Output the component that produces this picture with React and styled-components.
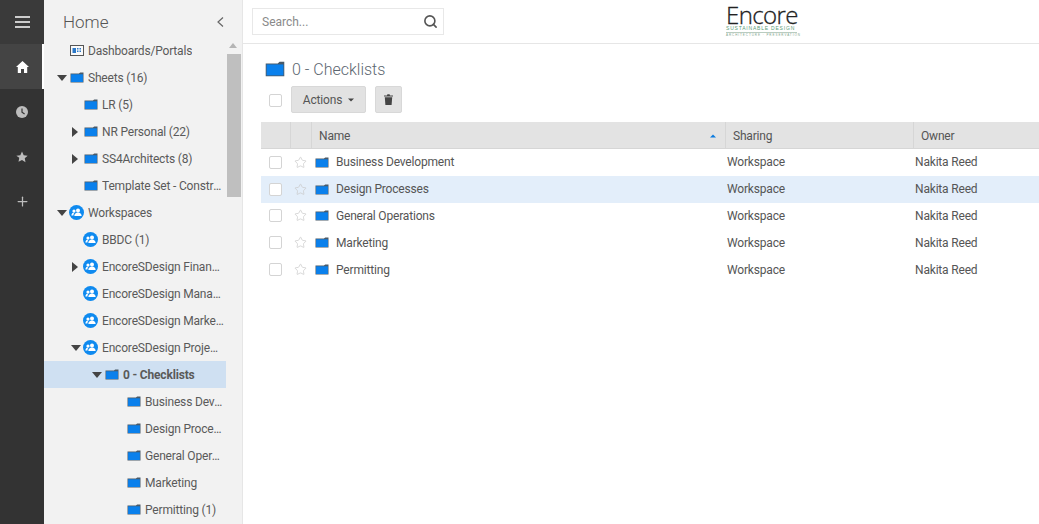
import styled, { createGlobalStyle } from "styled-components";
import { Plus, Search, Star } from "lucide-react";

const GlobalStyle = createGlobalStyle`
  html, body { margin: 0; padding: 0; height: 100%; overflow: hidden; }
  body { font-family: Roboto, "Liberation Sans", sans-serif; color: #555; background: #fff; }
  #root { height: 100%; }
`;

const Shell = styled.div`
  display: flex;
  height: 524px;
  overflow: hidden;
`;

/* left icon rail */
const Rail = styled.nav`
  width: 44px;
  flex: none;
  background: #333;
  display: flex;
  flex-direction: column;
`;

const RailItem = styled.div`
  height: 45px;
  display: flex;
  align-items: center;
  justify-content: center;
  box-sizing: border-box;
  color: ${(p) => (p.$active ? "#fff" : "#bdbdbd")};
  background: ${(p) => (p.$active ? "#444" : "transparent")};
  border-right: 2px solid ${(p) => (p.$active ? "#fff" : "transparent")};
  padding-left: 2px;
`;

const Burger = styled(RailItem)`
  height: 44px;
  color: #ccc;
  background: #3a3a3a;
`;

/* tree panel */
const Sidebar = styled.aside`
  width: 198px;
  flex: none;
  background: #f2f2f2;
  display: flex;
  flex-direction: column;
  border-right: 1px solid #e6e6e6;
  box-sizing: content-box;
  overflow: hidden;
`;

const SideHeader = styled.div`
  height: 37px;
  flex: none;
  display: flex;
  align-items: center;
  justify-content: space-between;
  padding: 6px 18px 0 19px;
  box-sizing: border-box;
`;

const SideTitle = styled.h2`
  margin: 0;
  font-size: 17px;
  font-weight: 300;
  color: #555;
`;

const SideBody = styled.div`
  flex: 1;
  min-height: 0;
  display: flex;
`;

const Tree = styled.ul`
  list-style: none;
  margin: 0;
  padding: 0;
  width: 182px;
  flex: none;
`;

const TreeRow = styled.li`
  height: 27px;
  display: flex;
  align-items: center;
  box-sizing: border-box;
  padding-left: ${(p) => p.$pad}px;
  padding-right: ${(p) => p.$tail || 1}px;
  background: ${(p) => (p.$selected ? "#cfe0f2" : "transparent")};
`;

const ArrowSlot = styled.span`
  width: 13px;
  flex: none;
  display: flex;
  align-items: center;
  color: #444;
`;

const TreeLabel = styled.span`
  margin-left: 4px;
  font-size: 12px;
  letter-spacing: -0.18px;
  font-weight: ${(p) => (p.$selected ? 700 : 400)};
  color: #5a5a5a;
  white-space: nowrap;
  overflow: hidden;
  text-overflow: ellipsis;
`;

const Scrollbar = styled.div`
  width: 14px;
  margin-left: 1px;
  flex: none;
  display: flex;
  flex-direction: column;
  align-items: center;
`;

const ScrollUp = styled.div`
  height: 17px;
  flex: none;
  display: flex;
  align-items: center;
  justify-content: center;
  color: #b5b5b5;
`;

const ScrollThumb = styled.div`
  width: 100%;
  height: 143px;
  background: #bfbfbf;
`;

/* main area */
const Main = styled.main`
  flex: 1;
  min-width: 0;
  display: flex;
  flex-direction: column;
`;

const TopBar = styled.header`
  height: 44px;
  flex: none;
  box-sizing: border-box;
  border-bottom: 1px solid #e6e6e6;
  display: flex;
  align-items: flex-start;
  padding: 8px 0 0 9px;
`;

const SearchBox = styled.div`
  width: 192px;
  height: 27px;
  box-sizing: border-box;
  border: 1px solid #e8e8e8;
  display: flex;
  align-items: center;
  justify-content: space-between;
  padding: 0 5px 0 9px;
  font-size: 12px;
  color: #8a8a8a;
`;

const Logo = styled.div`
  margin-left: 282px;
  margin-top: -3px;
  width: 71px;
  display: flex;
  flex-direction: column;
`;

const LogoName = styled.div`
  font-family: "Open Sans", "Liberation Sans", sans-serif;
  font-size: 24px;
  font-weight: 300;
  line-height: 20px;
  letter-spacing: -0.6px;
  color: #222;
  -webkit-text-stroke: 0.3px #222;
`;

const LogoTag = styled.div`
  font-family: "Liberation Sans", sans-serif;
  font-size: 5px;
  line-height: 5px;
  letter-spacing: 0.8px;
  white-space: nowrap;
  color: #5a9e78;
  margin-top: 1px;
  padding-bottom: 1px;
  border-bottom: 1px solid #b9ccc0;
`;

const LogoSub = styled(LogoTag)`
  font-size: 3px;
  line-height: 4px;
  margin-top: 0;
  border: 0;
  padding: 0;
  letter-spacing: 0.95px;
  color: #7fa58e;
`;

const Content = styled.section`
  flex: 1;
  min-height: 0;
  padding: 0 0 0 18px;
`;

const PageTitle = styled.div`
  height: 40px;
  display: flex;
  align-items: center;
  gap: 7px;
  padding: 10px 0 0 4px;
  box-sizing: border-box;
  font-size: 16px;
  font-weight: 300;
  color: #5c6670;
`;

const Toolbar = styled.div`
  height: 38px;
  display: flex;
  align-items: flex-start;
  gap: 9px;
  padding: 2px 0 0 8px;
  box-sizing: border-box;
`;

const CheckBox = styled.span`
  width: 13px;
  height: 13px;
  flex: none;
  display: block;
  box-sizing: border-box;
  background: #fff;
  border: 1px solid #d4d4d4;
  border-radius: 2px;
`;

const ToolCheck = styled(CheckBox)`
  margin-top: 8px;
`;

const ToolButton = styled.button`
  height: 27px;
  width: 75px;
  padding: 0;
  display: flex;
  align-items: center;
  justify-content: center;
  gap: 6px;
  background: #e2e2e2;
  border: 1px solid #d8d8d8;
  border-radius: 2px;
  font-family: inherit;
  font-size: 12px;
  letter-spacing: -0.18px;
  color: #555;
`;

const IconButton = styled(ToolButton)`
  width: 27px;
`;

const GridRow = styled.div`
  display: grid;
  grid-template-columns: 30px 21px 414px 188px 1fr;
  height: ${(p) => p.$h}px;
  align-items: center;
  background: ${(p) => (p.$hover ? "#e3eefa" : "transparent")};
`;

const HeadRow = styled(GridRow)`
  background: #e3e3e3;
  border-bottom: 1px solid #d6d6d6;
  box-sizing: border-box;
  align-items: stretch;
`;

const HeadCell = styled.div`
  display: flex;
  align-items: center;
  justify-content: space-between;
  padding: 2px 9px 0 7px;
  font-size: 12px;
  letter-spacing: -0.18px;
  color: #555;
  border-right: 1px solid ${(p) => (p.$last ? "transparent" : "#d6d6d6")};
`;

const CheckCell = styled.div`
  display: flex;
  align-items: center;
  padding-left: 8px;
`;

const StarCell = styled.div`
  display: flex;
  align-items: center;
  padding-left: 3px;
  color: #c9c9c9;
`;

const NameCell = styled.div`
  display: flex;
  align-items: center;
  gap: 7px;
  padding-left: 3px;
  font-size: 12px;
  letter-spacing: -0.18px;
`;

const TextCell = styled.div`
  font-size: 12px;
  letter-spacing: -0.18px;
  padding-left: ${(p) => p.$pad}px;
`;

const TeamSvg = styled.svg`
  flex: none;
  margin-left: -1px;
`;

const IconSvg = styled.svg`
  flex: none;
`;

const FolderIcon = ({ w = 14, h = 11 }) => (
  <IconSvg width={w} height={h} viewBox="0 0 14 11">
    <path d="M.5 1.6h8.4L10.2.4h3.3v10.2H.5z" fill="#4a5a68" />
    <rect x="1.1" y="2.3" width="11.8" height="7.7" fill="#0a80ec" />
  </IconSvg>
);

const TeamIcon = () => (
  <TeamSvg width="15" height="15" viewBox="0 0 15 15">
    <circle cx="7.5" cy="7.5" r="7.5" fill="#0f8aef" />
    <circle cx="9" cy="5.4" r="2" fill="#fff" />
    <path d="M5.3 11c0-2.2 1.6-3.4 3.7-3.4s3.6 1.2 3.6 3.4z" fill="#fff" />
    <circle cx="5" cy="6" r="1.6" fill="#fff" />
    <path d="M2.4 10.4c0-1.9 1.2-2.9 2.7-2.9l.5.1c-.8.7-1.2 1.6-1.2 2.8z" fill="#fff" />
  </TeamSvg>
);

const DashIcon = () => (
  <IconSvg width="14" height="11" viewBox="0 0 14 11">
    <rect x="0.5" y="0.5" width="13" height="10" fill="#fafafa" stroke="#555" />
    <rect x="2.5" y="3" width="3.5" height="5" fill="#2a78c8" />
    <path d="M7 3h1.5v1.4H7zM9.5 3H11v1.4H9.5zM7 5.5h1.5v1.4H7zM9.5 5.5H11v1.4H9.5z" fill="#2a78c8" />
  </IconSvg>
);

const Triangle = ({ dir, color = "#444" }) => {
  const points = {
    right: "1,0 7,5 1,10",
    down: "0,2 10,2 5,8",
    up: "0,7 8,7 4,2",
  };
  return (
    <svg width={dir === "right" ? 8 : 10} height="10" viewBox={dir === "right" ? "0 0 8 10" : "0 0 10 10"}>
      <polygon points={points[dir]} fill={color} />
    </svg>
  );
};

const MenuIcon = () => (
  <svg width="15" height="14" viewBox="0 0 15 14" fill="currentColor">
    <rect width="15" height="2" y="1" />
    <rect width="15" height="2" y="6" />
    <rect width="15" height="2" y="11" />
  </svg>
);

const HomeIcon = () => (
  <svg width="13" height="12" viewBox="0 0 13 12" fill="currentColor">
    <path d="M6.5 0L13 6h-1.8v6H8V8H5v4H1.8V6H0z" />
  </svg>
);

const ClockIcon = () => (
  <svg width="12" height="12" viewBox="0 0 12 12">
    <circle cx="6" cy="6" r="6" fill="currentColor" />
    <path d="M6 2.5V6.3L8.6 8" fill="none" stroke="#333" strokeWidth="1.2" />
  </svg>
);

const SolidStar = () => (
  <svg width="12" height="12" viewBox="0 0 24 24" fill="currentColor">
    <path d="M12 1l3.4 7.3 7.9 1-5.8 5.4 1.5 7.9L12 17.8l-7 3.8 1.5-7.9L.7 9.3l7.9-1z" />
  </svg>
);

const TrashIcon = () => (
  <svg width="9" height="11" viewBox="0 0 9 11" fill="#444">
    <path d="M0 1.4h3L3.4.3h2.2L6 1.4h3v1.2H0zM.8 3.3h7.4L7.6 11H1.4z" />
  </svg>
);

const tree = [
  { pad: 13, icon: "dash", label: "Dashboards/Portals" },
  { pad: 13, arrow: "down", icon: "folder", label: "Sheets (16)" },
  { pad: 27, icon: "folder", label: "LR (5)" },
  { pad: 27, arrow: "right", icon: "folder", label: "NR Personal (22)" },
  { pad: 27, arrow: "right", icon: "folder", label: "SS4Architects (8)" },
  { pad: 27, icon: "folder", label: "Template Set - Construction" },
  { pad: 13, arrow: "down", icon: "team", label: "Workspaces" },
  { pad: 27, icon: "team", label: "BBDC (1)" },
  { pad: 27, arrow: "right", icon: "team", label: "EncoreSDesign Financial" },
  { pad: 27, icon: "team", label: "EncoreSDesign Management" },
  { pad: 27, icon: "team", label: "EncoreSDesign Marketing" },
  { pad: 27, tail: 4, arrow: "down", icon: "team", label: "EncoreSDesign Projects" },
  { pad: 48, arrow: "down", icon: "folder", label: "0 - Checklists", selected: true },
  { pad: 70, icon: "folder", label: "Business Development" },
  { pad: 70, icon: "folder", label: "Design Processes" },
  { pad: 70, icon: "folder", label: "General Operations" },
  { pad: 70, icon: "folder", label: "Marketing" },
  { pad: 70, icon: "folder", label: "Permitting (1)" },
];

const rows = ["Business Development", "Design Processes", "General Operations", "Marketing", "Permitting"];

function TreeIcon({ type }) {
  if (type === "team") return <TeamIcon />;
  if (type === "dash") return <DashIcon />;
  return <FolderIcon />;
}

export default function App() {
  return (
    <Shell>
      <GlobalStyle />
      <Rail>
        <Burger><MenuIcon /></Burger>
        <RailItem $active><HomeIcon /></RailItem>
        <RailItem><ClockIcon /></RailItem>
        <RailItem><SolidStar /></RailItem>
        <RailItem><Plus size={15} strokeWidth={2} /></RailItem>
      </Rail>

      <Sidebar>
        <SideHeader>
          <SideTitle>Home</SideTitle>
          <svg width="7" height="10" viewBox="0 0 7 10" fill="none" stroke="#666" strokeWidth="1.2">
            <path d="M6 0.5L1 5l5 4.5" />
          </svg>
        </SideHeader>
        <SideBody>
          <Tree>
            {tree.map((item) => (
              <TreeRow key={item.label} $pad={item.pad} $tail={item.tail} $selected={item.selected}>
                <ArrowSlot>{item.arrow && <Triangle dir={item.arrow} />}</ArrowSlot>
                <TreeIcon type={item.icon} />
                <TreeLabel $selected={item.selected}>{item.label}</TreeLabel>
              </TreeRow>
            ))}
          </Tree>
          <Scrollbar>
            <ScrollUp><Triangle dir="up" color="#b5b5b5" /></ScrollUp>
            <ScrollThumb />
          </Scrollbar>
        </SideBody>
      </Sidebar>

      <Main>
        <TopBar>
          <SearchBox>
            Search...
            <Search size={15} color="#555" strokeWidth={2.6} />
          </SearchBox>
          <Logo>
            <LogoName>Encore</LogoName>
            <LogoTag>SUSTAINABLE DESIGN</LogoTag>
            <LogoSub>ARCHITECTURE · PRESERVATION</LogoSub>
          </Logo>
        </TopBar>

        <Content>
          <PageTitle>
            <FolderIcon w={20} h={16} />
            0 - Checklists
          </PageTitle>
          <Toolbar>
            <ToolCheck />
            <ToolButton>
              Actions
              <svg width="6" height="4" viewBox="0 0 6 4"><polygon points="0,0.5 6,0.5 3,3.5" fill="#444" /></svg>
            </ToolButton>
            <IconButton><TrashIcon /></IconButton>
          </Toolbar>

          <HeadRow $h={27}>
            <HeadCell />
            <HeadCell />
            <HeadCell>
              Name
              <svg width="6" height="4" viewBox="0 0 6 4"><polygon points="0,3.5 6,3.5 3,0.5" fill="#0a7be0" /></svg>
            </HeadCell>
            <HeadCell>Sharing</HeadCell>
            <HeadCell $last>Owner</HeadCell>
          </HeadRow>

          {rows.map((name, i) => (
            <GridRow key={name} $h={26.8} $hover={i === 1}>
              <CheckCell><CheckBox /></CheckCell>
              <StarCell><Star size={13} strokeWidth={1.3} /></StarCell>
              <NameCell>
                <FolderIcon />
                {name}
              </NameCell>
              <TextCell $pad={1}>Workspace</TextCell>
              <TextCell $pad={1}>Nakita Reed</TextCell>
            </GridRow>
          ))}
        </Content>
      </Main>
    </Shell>
  );
}
